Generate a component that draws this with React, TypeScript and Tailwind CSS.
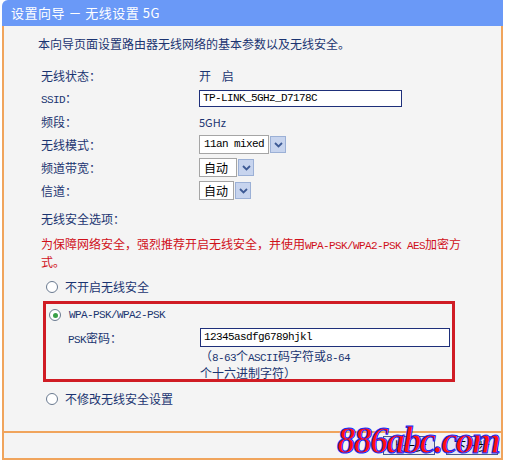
import React from "react";

const font = { fontFamily: '"Noto Sans CJK SC", "Liberation Sans", sans-serif' };
const mono = {
  fontFamily: '"Liberation Mono", "Noto Sans CJK SC", monospace',
  fontSize: "11px",
  letterSpacing: "-0.6px",
};

function Arrow() {
  return (
    <span className="w-[16px] h-[17px] ml-[1px] border border-[#9bb0d6] bg-[#c7d4ee] flex items-center justify-center">
      <svg width="9" height="6" viewBox="0 0 9 6">
        <path d="M1 1 L4.5 4.5 L8 1" stroke="#3d5a95" strokeWidth="1.8" fill="none" />
      </svg>
    </span>
  );
}

function Select({ label, w, m }: { label: string; w: string; m?: boolean }) {
  return (
    <div className="flex items-center">
      <div
        className={`${w} h-[19px] border border-[#a5a5a5] bg-white flex items-center px-[4px] text-[12px] text-black whitespace-nowrap`}
        style={m ? mono : undefined}
      >
        {label}
      </div>
      <Arrow />
    </div>
  );
}

function Radio({ on }: { on?: boolean }) {
  return (
    <span className="w-[12px] h-[12px] rounded-full border border-[#6a7a90] bg-white flex items-center justify-center">
      {on && <span className="w-[5px] h-[5px] rounded-full bg-[#3aa048]" />}
    </span>
  );
}

const rows = [
  { k: "无线状态：", v: <span className="tracking-[4px]">开 启</span> },
  {
    k: <span><span style={mono}>SSID</span>：</span>,
    v: (
      <div className="w-[203px] h-[17px] border border-[#1e2f7a] bg-white text-black px-[3px] leading-[15px]" style={mono}>
        TP-LINK_5GHz_D7178C
      </div>
    ),
  },
  { k: "频段：", v: <span className="text-[11px]">5GHz</span> },
  { k: "无线模式：", v: <Select label="11an mixed" w="w-[70px]" m /> },
  { k: "频道带宽：", v: <Select label="自动" w="w-[38px]" /> },
  { k: "信道：", v: <Select label="自动" w="w-[35px]" /> },
];

export default function App() {
  return (
    <div className="w-[506px] h-[461px] bg-white text-[12px] text-[#1b3471]" style={font}>
      <div className="ml-[2px] w-[501px] h-[460px] flex flex-col">
        <div className="h-[26px] bg-[#6a99f7] rounded-tl-[6px] text-white text-[13px] flex items-center pl-[9px] tracking-[0.5px]">
          设置向导 － 无线设置 5G
        </div>
        <div className="flex-1 bg-[#f4f4f4] border-l-2 border-r-2 border-b-2 border-[#f0a45c] flex flex-col">
          <div className="pl-[34px] pt-[9px] h-[38px]">本向导页面设置路由器无线网络的基本参数以及无线安全。</div>
          <div className="pl-[37px] flex flex-col">
            {rows.map((r, i) => (
              <div key={i} className="h-[23px] flex items-center">
                <div className="w-[158px]">{r.k}</div>
                <div>{r.v}</div>
              </div>
            ))}
            <div className="h-[28px] flex items-end pb-[2px]">无线安全选项：</div>
            <div className="text-[#d0101a] leading-[18px] mt-[5px]">
              <div className="h-[18px] whitespace-nowrap">
                为保障网络安全，强烈推荐开启无线安全，并使用<span style={mono}>WPA-PSK/WPA2-PSK AES</span>加密方
              </div>
              <div className="h-[18px]">式。</div>
            </div>
          </div>
          <div className="pl-[42px] mt-[7px] h-[18px] flex items-center gap-[7px]">
            <Radio />
            <span>不开启无线安全</span>
          </div>
          <div className="ml-[39px] w-[412px] h-[81px] mt-[5px] border-[3px] border-[#d01c24] pl-[3px] pt-[4px]">
            <div className="flex items-center gap-[8px] h-[14px]">
              <Radio on />
              <span style={mono}>WPA-PSK/WPA2-PSK</span>
            </div>
            <div className="flex items-start mt-[6px]">
              <div className="w-[151px] pl-[19px] pt-[1px]"><span style={mono}>PSK</span>密码：</div>
              <div>
                <div className="w-[250px] h-[19px] border border-[#1e2f7a] bg-white text-black px-[3px] leading-[17px]" style={mono}>
                  12345asdfg6789hjkl
                </div>
                <div className="h-[17px] leading-[17px] whitespace-nowrap">
                  （<span style={mono}>8-63</span>个<span style={mono}>ASCII</span>码字符或<span style={mono}>8-64</span>
                </div>
                <div className="h-[17px] leading-[17px]">个十六进制字符）</div>
              </div>
            </div>
          </div>
          <div className="pl-[42px] mt-[8px] h-[18px] flex items-center gap-[7px]">
            <Radio />
            <span>不修改无线安全设置</span>
          </div>
          <div className="flex-1" />
          <div className="border-t-2 border-[#f0a45c] h-[27px] relative flex items-center justify-end gap-[11px] pr-[3px]">
            <button className="w-[52px] h-[19px] border border-[#4a5a8a] bg-[#e4e6f4] text-[12px] text-black">上一步</button>
            <button className="w-[52px] h-[19px] border border-[#4a5a8a] bg-[#e4e6f4] text-[12px] text-black">下一步</button>
            <span
              className="absolute left-[333px] top-[-11px] text-[37px] italic font-bold text-[#ff1010] leading-none tracking-[-2px]"
              style={{ fontFamily: '"Liberation Serif", serif', WebkitTextStroke: "1px #1030ff" }}
            >
              886abc.com
            </span>
          </div>
        </div>
      </div>
    </div>
  );
}
